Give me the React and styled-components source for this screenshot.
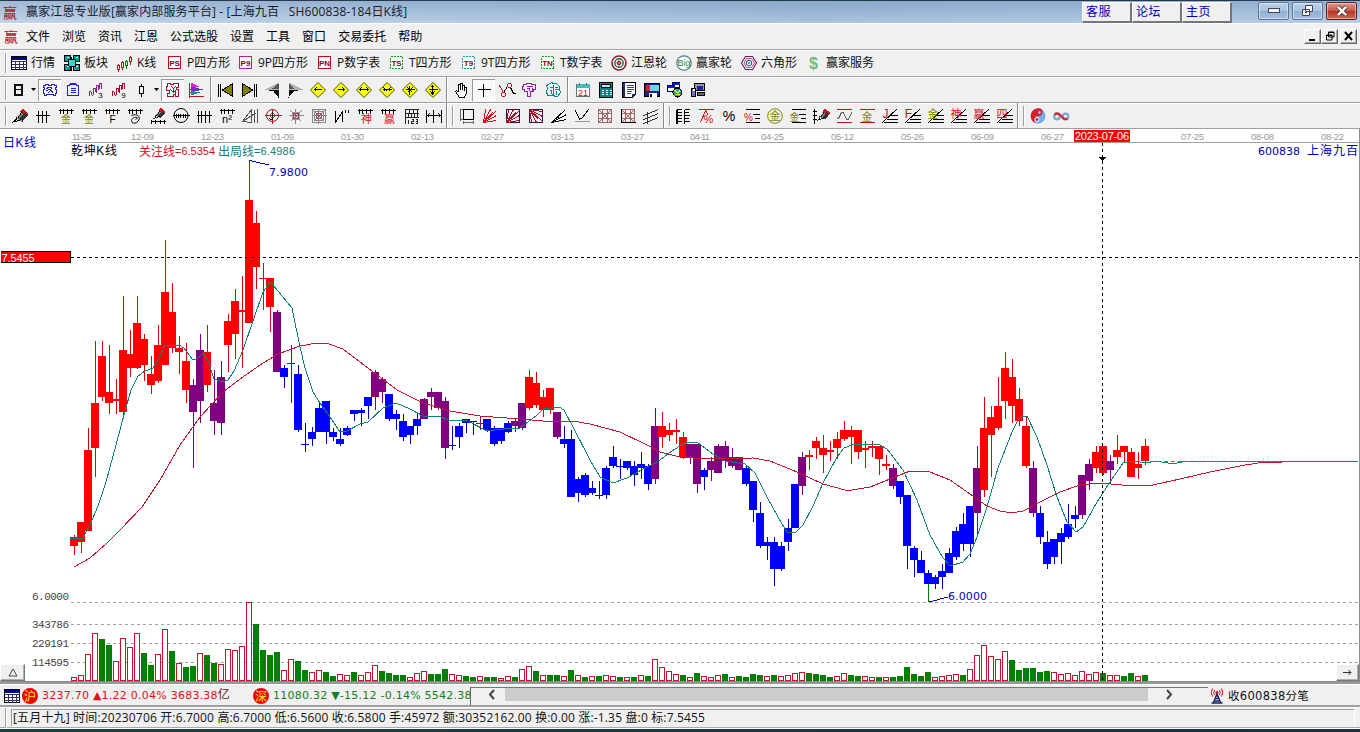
import React from 'react';
import styled, { createGlobalStyle, css } from 'styled-components';

const Global = createGlobalStyle`
  html, body { margin: 0; padding: 0; overflow: hidden; }
  body { background: #1b3140; font: 12px/16px "Open Sans", "Noto Sans CJK SC", sans-serif; color: #111; }
  * { box-sizing: border-box; }
  svg { display: block; flex: none; overflow: visible; }
`;

const Window = styled.div`
  width: 1360px; height: 732px; display: flex; flex-direction: column;
  background: #f0f0f0; overflow: hidden;
`;
const TitleBar = styled.header`
  height: 23px; flex: none; display: flex; align-items: flex-start; padding-left: 2px;
  border-top: 1px solid #27374c;
  background: linear-gradient(90deg, rgba(255,255,255,.12), rgba(255,255,255,0) 30%, rgba(60,110,170,.12) 60%, rgba(255,255,255,0)), linear-gradient(#93b0d0, #b9cee6);
`;
const Slot = styled.div`margin: ${p => p.$t || 0}px 0 0 ${p => p.$l || 0}px;`;
const Caption = styled.span`
  margin-left: 8px; line-height: 21px; flex: 1; white-space: pre; color: #16202c; letter-spacing: .13px;
`;
const LinkButton = styled.button`
  width: 49px; height: 20px; margin: 1px 1px 0 0; padding: 0 0 0 3px; text-align: left;
  font: 12px/16px "Liberation Sans", "Noto Sans CJK SC", sans-serif; letter-spacing: .4px; color: #0000b0; background: #f0f0f0;
  border: 1px solid; border-color: #fff #777 #777 #fff; box-shadow: 1px 1px 0 #6e7780;
`;
const FrameButtons = styled.div`display: flex; gap: 3px; margin: 1px 3px 0 26px;`;
const FrameButton = styled.button`
  width: 31px; height: 18px; padding: 0; display: grid; place-items: center;
  border: 1px solid ${p => (p.$close ? '#5b2020' : '#5d7896')}; border-radius: 2px;
  box-shadow: inset 0 0 0 1px rgba(255,255,255,.45);
  background: ${p => (p.$close ? 'linear-gradient(#dc9a8c, #c9584a 48%, #b03422 50%, #cf6a52)' : 'linear-gradient(#bdd1e8, #a9c2de 48%, #8fadcf 50%, #a8c3e0)')};
`;
const line = css`border-bottom: 1px solid #a0a0a0; box-shadow: inset 0 1px 0 #fff;`;
const MenuBar = styled.nav`
  height: 27px; flex: none; display: flex; align-items: center; padding-left: 3px; ${line}
`;
const MenuItem = styled.span`margin-left: ${p => (p.$first ? 7 : 12)}px; padding-top: 1px; white-space: nowrap; color: #000;`;
const MdiButtons = styled.div`display: flex; margin: 0 3px 0 auto;`;
const MdiButton = styled.button`
  width: 17px; height: 15px; padding: 0; margin-left: ${p => p.$gap || 0}px; display: grid; place-items: center;
  background: #f0f0f0; border: 1px solid; border-color: #fff #666 #666 #fff; box-shadow: inset -1px -1px 0 #aaa;
`;
const ToolBar = styled.div`
  height: ${p => p.$h || 26}px; flex: none; display: flex; align-items: center; padding-left: 5px; ${line}
`;
const Grip = styled.i`width: 2px; height: 20px; flex: none; margin-right: ${p => p.$r ?? 4}px; border-left: 1px solid #a0a0a0; border-right: 1px solid #fff;`;
const Divider = styled.i`width: 2px; height: 25px; flex: none; border-left: 1px solid #8c8c8c; border-right: 1px solid #fff; margin: 0 ${p => p.$r ?? 6}px 0 ${p => p.$l ?? 3}px;`;
const Labelled = styled.div`
  width: ${p => p.$w}px; display: flex; align-items: center; gap: 4px; white-space: nowrap; color: #111;
`;
const Tool = styled.div`
  width: ${p => p.$w || 23}px; height: 22px; flex: none; display: grid; place-items: center;
  ${p => p.$on && css`background: #f9f9fb; box-shadow: inset 1px 1px 0 #999, inset -1px -1px 0 #fff;`}
`;
const ChartPane = styled.main`
  position: relative; height: 553px; flex: none; background: #fff; border-right: 1px solid #8d8d8d; border-bottom: 1px solid #8d8d8d;
`;
const CornerButton = styled.button`
  position: absolute; bottom: 0; ${p => (p.$right ? 'right: 0;' : 'left: 0;')}
  width: ${p => (p.$right ? 23 : 25)}px; height: 17px; padding: 0; background: #f0f0f0; display: grid; place-items: center;
  border: 1px solid; border-color: #fff #777 #777 #fff; box-shadow: inset -1px -1px 0 #b0b0b0;
`;
const QuoteBar = styled.div`
  height: 25px; flex: none; display: flex; align-items: center; padding: 2px 0 0 4px;
  border-top: 2px solid #999; border-bottom: 2px solid #a0a0a0; box-shadow: inset 0 1px 0 #fff;
`;
const Quotes = styled.div`width: 466px; display: flex; align-items: center; overflow: hidden; flex: none;`;
const Market = styled.b`
  width: 16px; height: 16px; border-radius: 50%; background: #f00000; color: #ffee20; flex: none;
  font: 12px/15px "Noto Sans CJK SC", sans-serif; text-align: center; margin-left: ${p => p.$l}px;
`;
const Quote = styled.span`
  margin-left: 4px; width: ${p => p.$w}px; white-space: nowrap; flex: none; color: ${p => p.$c};
  font: 11px/16px "DejaVu Sans", "Noto Sans CJK SC", sans-serif; letter-spacing: .24px;
`;
const Unit = styled.span`color: #701018; font-size: 12px;`;
const ScrollBar = styled.div`
  width: 738px; height: 18px; flex: none; display: flex; align-items: center; border-left: 1px solid #666; border-top: 1px solid #777; padding-bottom: 3px;
`;
const ScrollEnd = styled.div`width: ${p => p.$w}px; display: flex; padding-left: ${p => p.$p}px;`;
const Thumb = styled.div`width: 643px; height: 13px; background: #cdcdcd;`;
const Receive = styled.span`
  margin-left: 4px; white-space: nowrap; font: 12px/16px "DejaVu Sans", "Noto Sans CJK SC", sans-serif; letter-spacing: .3px; font-size: 11.500px; color: #111;
`;
const InfoBar = styled.footer`
  height: 21px; flex: none; display: flex; align-items: center; padding: 2px 5px 1px 5px;
  border-bottom: 1px solid #aaa; box-shadow: inset 0 1px 0 #fff, 0 1px 0 #fff; margin-bottom: 1px;
`;
const InfoText = styled.div`
  flex: 1; height: 17px; line-height: 16px; border-left: 1px solid #a0a0a0; border-top: 1px solid #a0a0a0; border-right: 1px solid #fff;
  white-space: pre; color: #111; letter-spacing: .162px; padding-left: 1px;
`;
const Desktop = styled.div`flex: 1; background: linear-gradient(90deg, #1e4044, #1c2f45);`;

/* ---- icons ---- */
const Ic = ({ children, s = 16 }) => (
  <svg width={s} height="16" viewBox={`0 0 ${s} 16`} shapeRendering="crispEdges">
    <g transform="translate(.5 .5)" fill="none">{children}</g>
  </svg>
);
const P = ({ d, s = '#000', f = 'none', w = 1, aa }) => (
  <path d={d} stroke={s} fill={f} strokeWidth={w} shapeRendering={aa ? 'auto' : undefined} />
);
const T = ({ c = '#000', x = 7.5, y = 14, z = 11, children }) => (
  <text x={x} y={y} fontSize={z} fill={c} textAnchor="middle" fontFamily='"Liberation Sans", "Noto Sans CJK SC", sans-serif'>{children}</text>
);
const RED = '#c8101c', OLV = '#868600';
const Logo = () => <Ic><T c="#b01020" z={14} y={13}>赢</T></Ic>;
const Table = () => (
  <Ic><P d="M0 1h15v13h-15z" f="#fff" /><P d="M0 2h15M0 3h15" s="#000090" w={2} /><P d="M0 6h15M0 9h15M0 12h15M4 5v9M8 5v9M12 5v9" s="#30305a" /></Ic>
);
const Blocks = () => (
  <Ic>
    <P d="M0 0h6v6h-6zM9 0h6v6h-6zM0 9h6v6h-6zM9 9h6v6h-6z" f="#159a9a" />
    <P d="M4 4h7v7h-7z" f="#40d0d0" /><P d="M7 1v3M7 11v4" /><P d="M2 2h2M11 2h2M2 11h2M11 11h2" s="#c0ffff" />
  </Ic>
);
const KIcon = () => (
  <Ic>
    <P d="M1 8v2M1 14v2M0 10h2v4h-2zM5 5v2M5 12v2M4 7h2v5h-2z" s={RED} /><P d="M9 4v2M9 10v3M8 6h2v4h-2z" s="#008000" /><P d="M13 0v2M13 6v3M12 2h2v4h-2z" s={RED} />
  </Ic>
);
const Boxed = ({ c, t, dash }) => (
  <Ic>
    <rect x="1" y="1" width="12" height="12" stroke={c} fill="#fff" strokeDasharray={dash ? '2 1' : undefined} />
    <text x="7" y="10" fontSize="8" fontWeight="bold" fill="#8a0018" textAnchor="middle" fontFamily="Liberation Sans">{t}</text>
  </Ic>
);
const Wheel = () => (
  <Ic><g shapeRendering="auto"><circle cx="7.5" cy="7.5" r="7" stroke="#8c2030" strokeWidth="1.6" fill="#fff" /><circle cx="7.5" cy="7.5" r="4.2" stroke="#207040" strokeWidth="1.4" /><circle cx="7.5" cy="7.5" r="1.6" stroke="#8c2030" strokeWidth="1.2" /><P aa d="M7.5 3v9M3 7.5h9" s="#704040" w={.6} /></g></Ic>
);
const Big = () => (
  <Ic><g shapeRendering="auto"><circle cx="7.5" cy="7.5" r="7.2" stroke="#507890" fill="#fff" strokeWidth="1.2" /><T z={9} y={10.5} c="#258a45">Big</T></g></Ic>
);
const Hexa = () => (
  <Ic><g shapeRendering="auto"><P aa d="M4 1h7l4 6.5-4 6.5H4L0 7.5z" s="#602080" f="#fff" w={1.2} /><P aa d="M5 3h5l3 4.5-3 4.5H5L2.5 7.5z" s="#d04050" /><circle cx="7.5" cy="7.5" r="2.8" stroke="#2040a0" /><circle cx="7.5" cy="7.5" r="1" fill="#209060" /></g></Ic>
);
const Dollar = () => <Ic><text x="7" y="13" fontSize="16" fontWeight="bold" fill="#75bb78" textAnchor="middle" fontFamily="Liberation Sans">$</text></Ic>;
const Drop = () => <svg width="5" height="3"><path d="M0 0h5L2.5 3z" /></svg>;

const Day = () => <Ic><path d="M3 2h9v12H3zM5 4v3h5V4zM5 8v4h5V8z" fill="#111" fillRule="evenodd" transform="translate(-.5 -.5)" /></Ic>;
const Picture = () => <Ic><P d="M1 3h2v-1h3v1h3V2h3v1h2v2h-1v2h1v4h-1v2h-2v-1H4v1H2v-2H1V7h1V5H1zM4 6q3-2 6 0M3 9q4-4 8 1M5 11l3-3 3 3M6 7h2" s="#2424c8" /></Ic>;
const Clip = () => <Ic><P d="M4 2h7v1h2v10H2V3h2zM5 1h5v1H5zM5 6h5M5 8h5M5 10h5" s="#2020d8" /></Ic>;
const Wave = ({ c, n }) => <Ic><P d="M1 13V9h1l1 1v2l1 1 1-1V6h2v3l1 1V3h2v4l1-1V1h2v5" s={c} /><T x={12} y={15} z={8}>{n}</T></Ic>;
const Candle = () => <Ic><P d="M6 4h4v7H6zM8 1v3M8 11v3" /></Ic>;
const Puzzle = () => <Ic><P d="M2 1h3v1h3V1h5v4h-2v2h2v7h-3v-2H8v2H2v-3h2V8H1V4h1zM6 4l2 2 2-2M5 7l3 3 2-2v3M8 6v4" s="#a01028" /></Ic>;
const Flag = () => <Ic><P d="M1 0v15M0 14h15" s={RED} /><path d="M2 0l8 4-8 3z" fill="#e020e0" /><path d="M2 4l13 3-13 3z" fill="#7030c0" /><path d="M2 8l9 2-9 3z" fill="#109090" /></Ic>;
const First = ({ flip }) => <Ic><g transform={flip ? 'translate(15 0) scale(-1 1)' : undefined}><P d="M0 1v13M2 1v13" /><P d="M14 1v13L4 7.5z" f="#808000" /></g></Ic>;
const Arrow3 = ({ flip }) => <Ic><g transform={flip ? 'translate(15 0) scale(-1 1)' : undefined}><path d="M0 7L14 0v7z" fill="#b0b0b0" /><path d="M0 7h14v8L9 9z" fill="#101010" /><path d="M8 6h6V1z" fill="#555" /></g></Ic>;
const GLYPH = {
  l: 'M4 7h7M6 5L4 7l2 2', r: 'M4 7h7M9 5l2 2-2 2', h: 'M3 7h9M5 5L3 7l2 2M10 5l2 2-2 2', i: 'M3 7h9M4 5l2 2-2 2M11 5L9 7l2 2M7 6v2',
  x: 'M3 7h9M7 3v9M5 5l5 5M10 5l-5 5', v: 'M3 7h9M7 3v9M5 5l2-2 2 2M5 9l2 3 2-3',
};
const Diamond = ({ g }) => <Ic><P d="M7.5 0L15 7.5 7.5 15 0 7.5z" f="#ffff10" s="#505000" aa /><P d={GLYPH[g]} /></Ic>;
const Hand = () => <Ic><P d="M5 9V2h2v5M7 7V1h2v6M9 7V3h2v5M11 8V5h2v5l-2 5H6L2 9l1-1 2 2" f="#fff" /></Ic>;
const Plus = () => <Ic><P d="M7 1v13M1 7h13" /></Ic>;
const Nodes = () => <Ic><P d="M4 10l4-6M11 5l3 6h2" /><circle cx="10" cy="3" r="2" stroke={RED} /><circle cx="4" cy="12" r="2" stroke={RED} /><P d="M0 3l4 7" s={RED} /></Ic>;
const Cloud = ({ c, v }) => <Ic><P d={v ? 'M3 2l3-2 2 1h3l3 3v3l1 3-3 4H9l-1-2-2 1H2l-1-4 1-3-1-3zM8 2v9M4 5h3M9 5h3M4 8h2v3M11 8v4M9 7h4' : 'M1 2h3V1h5v1h4v5h-2v2H8v5H5V9H2V7H0V4h1zM4 4h6M4 6h3v2M10 5v3'} s={c} /></Ic>;
const Calendar = () => <Ic><P d="M1 2h13v12H1z" f="#fff" s="#607878" /><path d="M1 1h13v4H1z" fill="#48b8b8" /><P d="M4 0v2M11 0v2" s="#607070" /><T c={RED} z={9} y={13}>21</T></Ic>;
const Calc = () => <Ic><P d="M1 0h13v15H1z" f="#108080" /><P d="M3 2h9v3H3z" f="#b0f0f0" /><P d="M3 8h2M7 8h2M11 8h2M3 10h2M7 10h2M11 10h2M3 12h2M7 12h2M11 12h2" s="#e0ffff" /></Ic>;
const Notebook = () => <Ic><P d="M1 0h13v12l-3 3H1z" f="#fff" /><P d="M2 0v14" w={2} s="#1c2c80" /><P d="M5 3h7M5 5h7M5 7h7M5 9h5M5 11h4" s="#404080" /><path d="M10 15v-4h4z" fill="#1c2c80" /></Ic>;
const Disk = () => <Ic><P d="M0 1h15v13H0z" f="#1c1c8c" /><path d="M1 2h4v6H1z" fill="#e02020" /><path d="M5 2h9v6H5z" fill="#68d8e8" /><path d="M4 10h8v4H4z" fill="#fff" /><path d="M5 11h2v3H5z" fill="#111" /></Ic>;
const WinGlobe = () => <Ic><P d="M0 3h7v6H0zM5 0h7v5H5z" f="#fff" s="#000080" /><P d="M0 4h7M5 1h7" s="#1020c0" w={2} /><circle cx="10" cy="10" r="4.5" fill="#30a0a0" stroke="#000" /><P d="M7 8l3 2 3-2M8 12h4" s="#e8e840" w={1.5} /></Ic>;
const Pcs = () => <Ic><P d="M4 1h10v7H4z" f="#9898a8" /><path d="M6 3h6v4H6z" fill="#2020a0" /><P d="M1 6h4v8H1z" f="#7070c8" /><P d="M7 10h7v3H7z" f="#666" /><path d="M2 6h2v2H2z" fill="#fff" /></Ic>;

const Pen = () => <><path d="M4 10L8 3l6 5-5 5z" fill="#8a8a8a" /><path d="M7 3l3-3 6 5-2 3z" fill="#c81420" /><path d="M7 10l5-6 3 3-5 6z" fill="#333" /><P d="M9 4l-4 6M4 9l-1 4 6-2M0 14l4-3" /><P d="M8 4l-3 4" s="#ddd" /></>;
const Pencil = () => <Ic><Pen /></Ic>;
const Comb = ({ children }) => <Ic><P d="M0 2h15M2 0v5M5 0v5M9 0v5M13 0v5" />{children}</Ic>;
const Hash = ({ n = 3 }) => <Ic><P d={n === 3 ? 'M0 7h14M3 2v12M7 2v12M11 2v12' : 'M0 7h15M2 2v12M5 2v12M9 2v12M13 2v12'} /></Ic>;
const Spiral = () => <Comb><P d="M4 7c8-3 10 4 5 7s-7-4-2-5 2 2 1 2" aa /></Comb>;
const PenRule = () => <Ic><g transform="translate(2 -1) scale(.82)"><Pen /></g><P d="M0 13h15M1 11v4M5 11v4M10 11v4M14 11v4" /></Ic>;
const Disc = () => <Ic><circle cx="7.5" cy="7" r="7" stroke="#000" shapeRendering="auto" /><P d="M-1 7h17M3 5v4M5 5v4M7 5v4M10 5v4M12 5v4" /></Ic>;
const Fan1 = () => <Ic><P d="M0 13L9 1v13zM0 13L14 4M9 1v13M12 1v13M15 0v14" s="#555" /></Ic>;
const CrossC = () => <Ic><circle cx="7" cy="7" r="6" stroke="#801830" shapeRendering="auto" /><P d="M-1 7h17M7 0v15" s={RED} /><P d="M7 3v8M4 10l3 2" /><circle cx="7" cy="7" r="2" stroke="#933" /></Ic>;
const Web = ({ sq }) => <Ic><P d="M7 0v15M0 7h15M2 2l11 11M13 2L2 13" s="#888" />{sq ? <P d="M1 1h13v13H1zM3 3h9v9H3z" s="#888" /> : <circle cx="7.5" cy="7.5" r="4" stroke="#999" />}<P d="M5 5h5v5H5zM6 6l3 3M9 6L6 9" s="#a05060" /></Ic>;
const Zig = () => <Ic><P d="M1 14V2M1 14L8 3M8 13V2" /><P d="M11 1v3M14 1v3" /></Ic>;
const Ruler = () => <Ic><P d="M1 1h14M1 5h14M1 9h14M2 0v15M6 1v4M10 1v4M14 1v8M5 5v4M8 5v4M11 5v4M5 11v4M8 11h2v2h-2v2h2M12 11h2v4h-2M12 13h2" s="#222" /></Ic>;
const Span = () => <Ic><P d="M0 1v13M7 1v13M15 1v13M1 7h13M3 5L1 7l2 2M12 5l2 2-2 2" /></Ic>;
const Box1 = () => <Ic><P d="M4 1h10v10H4z" /><P d="M1 1v11M0 1h3M0 11h3M4 14h10M4 12v3M14 12v3" s="#666" /></Ic>;
const Rays = ({ c, box, flip }) => (
  <Ic><g transform={flip ? 'translate(0 15) scale(1 -1)' : undefined}>{box && <P d="M1 1h13v13H1z" s="#401040" />}<P d="M1 14L3 1M1 14L8 1M1 14L14 2M1 14L14 7M1 14l13-2M1 14L10 4" s={c} /></g></Ic>
);
const Rays2 = () => <Ic><P d="M0 14L14 1M0 14L15 6M0 14l15-3M6 8l2 3" /></Ic>;
const Vee = () => <Ic><P d="M1 2l4 9 3-2 6-8" /><P d="M0 13h15" s="#999" /></Ic>;
const GridI = ({ b }) => <Ic><P d="M1 1h13v13H1zM5 1v13M10 1v13M1 5h13M1 10h13M1 1l13 13M14 1L1 14" s="#a06868" />{b && <P d="M1 0v14h14" />}</Ic>;
const Lines = () => <Ic><P d="M0 7l15-6M0 11l15-6M0 15l15-6M4 3v12" s="#333" /></Ic>;
const Ladder = () => <Ic><P d="M1 1v14M1 1h5M1 4h5M1 7h5M1 10h5M1 13h5M9 1v14M9 1h5M9 4h4M9 7h5M9 10h4M9 13h5" /><P d="M2 1v14" /></Ic>;
const PctRoof = () => <Ic><P d="M0 1h15M2 14L7 2l3 5" s={RED} /><T c={RED} z={11} x={10}>%</T></Ic>;
const LineGlyph = ({ c, g }) => <Ic><P d="M1 1h14M8 6h7M1 14h14M10 10h5" /><T c={c} z={10} x={4} y={12}>{g}</T></Ic>;
const CoinG = () => <Ic><circle cx="7.5" cy="7.5" r="7.3" stroke={OLV} shapeRendering="auto" /><T c={OLV} z={11} y={11.5}>金</T></Ic>;
const RulePen = () => <Ic><P d="M1 0v15M-1 3h4M-1 7h4M-1 11h4" /><g transform="translate(3 0) scale(.85)"><Pen /></g></Ic>;
const Sine = () => <Ic><P d="M0 1h15M0 14h15" s={RED} /><P d="M0 10h2l3-6h2l3 7h2l3-7" s="#666" /></Ic>;
const Bank = () => <Ic><P d="M0 1h15M0 14h15" s={RED} /><T c={OLV} z={11} y={12}>金</T></Ic>;
const Fan = ({ g, c = '#d01018' }) => {
  const latin = g.charCodeAt(0) < 128;
  return <Ic><P d="M0 14L15 0M8 7h7M4 11h11M1 14h14" /><T c={c} z={latin ? 12 : 11} x={latin ? 3 : 4.5} y={9}>{g}</T></Ic>;
};
const Yin = () => (
  <Ic><g shapeRendering="auto"><circle cx="7.5" cy="7.5" r="7.5" fill="#6fb0ea" /><path d="M10 0A7.7 7.7 0 1 0 6 15a4 4 0 0 1 2-7.5A4 4 0 0 0 10 0z" fill="#d81c2c" /><circle cx="9" cy="4" r="1.4" fill="#8fc4f0" /><circle cx="6.5" cy="11" r="2" stroke="#fff" fill="#d81c2c" /></g></Ic>
);
const Infinity8 = () => <Ic><g shapeRendering="auto"><circle cx="3.5" cy="8" r="2.8" stroke="#78acd8" strokeWidth="2.2" /><circle cx="12" cy="8" r="2.8" stroke="#78acd8" strokeWidth="2.2" /><P aa d="M1 6c4-3 6 1 7 2s3 4 6 2" s="#d02838" w={2.2} /></g></Ic>;
const Tower = () => (
  <Ic s={14}><g shapeRendering="auto"><P aa d="M6.500 5L3 14M6.500 5L10 14M4.500 10h4M1 14.500h11M5 7.500h3M3.500 12.500h6" s="#182068" w={1.3} />
    <P aa d="M4 1.500q-1.500 2.500 0 5M2 0q-2.500 4 0 8M9 1.500q1.500 2.500 0 5M11 0q2.500 4 0 8" s={RED} /><circle cx="6.5" cy="4" r="1.5" fill={RED} /></g></Ic>
);

/* ---- chart data: high, body top, body bottom, low, colour, volume top, volume direction ---- */
const RAW = `535 537 546 555 r 677 u|522 522 542 553 r 675 u|428 450 531 531 r 654 u|341 403 448 477 r 633 u|341 356 397 401 r 639 d|345 392 403 414 r 645 d|379 399 401 414 r 661 u|296 350 412 417 r 638 u|330 354 368 377 r 647 u|296 323 368 369 r 633 u
334 339 365 381 r 653 d|356 374 385 394 r 665 d|325 345 381 383 r 654 u|240 292 365 365 r 629 u|283 312 348 353 r 651 d|336 348 352 374 r 663 u|343 361 390 403 r 667 d|379 385 412 468 p 666 d|334 350 401 423 p 653 u|325 352 385 392 r 655 d
370 403 421 435 p 663 d|361 377 423 435 p 664 u|314 321 345 372 r 649 u|289 301 334 359 r 650 u|276 310 312 368 r 646 u|160 200 323 323 r 602 u|211 223 267 289 r 624 d|263 278 279 310 r 650 d|278 278 307 332 r 655 d|310 312 372 372 p 652 d
365 368 377 388 b 670 u|345 363 364 403 p 659 u|365 374 430 432 b 661 d|423 444 445 452 b 670 d|427 432 439 446 b 672 u|401 408 432 432 b 670 u|401 401 432 444 b 672 d|428 432 437 441 b 676 d|428 439 444 446 b 674 u|426 428 435 436 b 675 u
410 410 414 421 b 672 d|408 410 413 426 b 675 u|397 397 406 419 b 672 u|370 372 397 410 p 665 u|377 379 392 403 p 671 d|394 394 419 421 b 673 d|410 414 419 430 b 675 d|414 421 437 441 b 675 d|426 426 435 444 b 677 u|413 419 426 435 b 673 u
398 399 419 419 p 671 u|388 392 397 410 p 674 d|392 392 408 410 p 674 d|397 401 448 459 p 669 d|426 445 446 450 b 674 u|423 426 437 448 b 675 u|419 419 423 433 b 676 d|421 421 422 435 b 677 d|417 423 424 430 p 676 u|419 419 430 432 b 677 d
426 428 444 446 b 677 d|428 428 441 444 b 678 u|421 423 432 433 b 676 u|419 421 426 432 p 677 d|403 403 428 430 p 669 u|370 377 408 410 r 666 u|372 383 405 408 r 671 d|390 397 410 417 r 675 u|388 388 410 414 r 675 d|412 412 437 439 p 675 d
426 439 444 448 b 676 u|430 439 497 497 b 670 d|477 479 493 502 b 675 u|473 475 495 497 b 677 d|481 488 493 495 b 676 u|481 495 496 499 b 676 d|466 468 495 499 b 675 u|446 457 466 468 b 676 u|459 466 467 479 b 677 d|461 461 468 470 b 677 u
461 466 475 486 b 677 d|452 464 468 479 b 675 u|464 466 484 490 b 676 d|408 426 479 484 p 659 u|412 426 437 448 r 667 u|423 430 435 441 r 671 u|419 430 432 444 r 674 u|432 437 457 459 r 675 d|444 444 457 464 p 677 u|444 444 484 493 p 673 d
468 470 477 490 b 676 u|457 461 470 481 p 677 u|444 446 473 473 p 675 u|441 446 461 468 p 674 d|448 457 466 468 p 677 u|457 457 470 470 p 676 d|466 468 484 486 b 677 d|481 481 510 522 b 674 d|502 513 546 548 b 675 d|537 542 546 560 b 676 u
537 542 569 586 b 675 d|542 546 569 571 b 676 u|519 528 542 551 b 675 u|484 484 528 528 b 673 u|452 457 486 495 p 672 u|450 455 457 470 r 673 d|437 441 448 459 r 674 d|435 448 455 473 r 675 d|441 450 452 461 r 677 d|432 439 448 459 r 676 u
421 430 439 441 r 673 u|426 430 437 464 r 675 d|430 430 452 459 r 676 d|441 448 450 468 r 676 u|441 446 448 457 r 677 u|446 446 459 475 r 677 d|455 464 466 470 r 677 u|464 468 486 489 p 677 d|481 481 497 504 b 676 d|495 495 546 569 b 667 d
546 548 560 577 b 674 d|551 560 573 573 b 676 d|570 573 584 584 b 672 d|575 577 584 589 b 677 u|564 571 577 589 b 676 u|548 553 573 573 b 675 u|527 531 557 560 b 674 u|513 524 544 551 b 675 d|506 506 544 557 b 669 u|446 468 513 537 p 655 u
397 428 490 497 r 645 u|406 417 435 477 r 656 u|377 406 428 430 r 659 u|352 368 401 419 r 651 u|359 377 406 423 r 660 d|388 399 421 426 r 670 d|417 426 466 468 r 668 d|461 468 513 517 p 668 d|506 513 537 544 b 672 d|531 542 564 569 b 671 d
539 539 557 564 b 672 u|528 533 542 564 b 674 u|504 524 537 539 b 673 u|506 515 519 528 b 675 u|475 475 515 519 p 671 u|459 464 481 490 p 674 u|446 452 468 473 r 672 u|446 446 473 475 r 673 d|455 461 470 483 p 675 u|435 450 457 464 r 675 u
446 446 452 463 r 676 d|448 452 477 477 r 673 d|452 464 468 479 r 676 u|439 446 461 465 r 675 d`;
const BARS = RAW.split(/[|\n]/).map((row, i) => {
  const [h, t, b, l, c, v, dir] = row.trim().split(' ');
  return { x: 74 + 7 * i, h: +h, t: +t, b: +b, l: +l, c: { r: '#ff0000', p: '#800080', b: '#0000ff' }[c], wick: { r: '#e00000', p: '#780078', b: '#0000b8' }[c], v: +v, up: dir === 'u' };
});
const TEAL = '70,538 82,539 86,532 90,525 98,506 106,482 116,445 125,411 131,390 138,376 145,371 153,368 160,356 165,345 179,345 184,348 193,360 197,359 203,353 208,361 214,379 222,382 228,380 234,371 243,350 263,292 270,282 273,285 292,308 300,347 305,368 313,392 320,403 330,417 340,432 347,431 360,424 368,422 383,408 396,403 410,409 425,417 439,416 448,420 468,421 487,431 503,429 520,428 537,415 543,409 559,407 564,410 573,427 590,460 600,477 613,483 627,478 643,469 657,462 672,451 683,444 690,442 697,442 702,446 713,454 725,461 745,464 755,473 767,497 782,524 787,532 796,532 803,525 813,506 823,483 837,457 844,448 852,445 878,444 887,449 903,470 917,500 930,535 943,558 950,566 963,562 970,554 977,537 987,507 998,468 1012,432 1018,420 1022,416 1027,416 1037,437 1047,465 1057,497 1067,522 1076,532 1083,527 1097,502 1110,482 1123,463 1133,461 1146,463 1157,461 1173,464 1186,461 1358,461';
const CRIMSON = '74,567 90,558 107,543 120,530 142,507 160,480 180,445 200,417 223,392 240,379 260,365 278,354 300,346 317,343 329,344 343,349 360,362 380,377 397,390 423,403 450,411 480,416 520,419 543,421 573,421 590,424 620,432 647,445 660,452 680,457 707,459 753,458 770,461 797,472 823,484 845,490 852,490 870,487 890,479 910,471 930,472 950,480 970,494 987,506 1000,511 1012,513 1023,511 1040,502 1060,492 1080,485 1100,483 1133,486 1153,485 1180,479 1210,472 1245,465 1265,462 1282,462';
const DATES = [[72, '11-25', 19], [131, '12-09'], [201, '12-23'], [271, '01-09'], [341, '01-30'], [411, '02-13'], [481, '02-27'], [551, '03-13'], [621, '03-27'], [690, '04-11', 20], [761, '04-25'], [831, '05-12'], [901, '05-26'], [971, '06-09'], [1041, '06-27'], [1181, '07-25'], [1251, '08-08'], [1321, '08-22']];

const SANS = '"Liberation Sans", "Noto Sans CJK SC", sans-serif';
const MONO = '"Liberation Mono", "Noto Sans CJK SC", monospace';
const WIDE = '"DejaVu Sans", "Noto Sans CJK SC", sans-serif';
const Label = ({ x, y, w, c = '#000', z = 12, f = SANS, children }) => (
  <text x={x} y={y} textLength={w} fontSize={z} fill={c} fontFamily={f}>{children}</text>
);

function Chart() {
  return (
    <svg width="1359" height="552" viewBox="0 129 1359 552" shapeRendering="crispEdges">
      <path d="M71 142.5H1359" stroke="#a0a0a0" />
      {DATES.map(([x, t, w]) => <Label key={t} x={x} y={139.5} w={w || 23} z={9.5} c="#999">{t}</Label>)}
      {[602, 624, 643, 662].map(y => <path key={y} d={`M71 ${y + 0.5}H1358`} stroke="#a0a0a0" strokeDasharray="3 3" />)}
      {BARS.map(b => (
        b.up
          ? <rect key={b.x} x={b.x - 2.5} y={b.v + 0.5} width="5" height={681 - b.v - 1} fill="#fff" stroke="#c81428" />
          : <rect key={b.x} x={b.x - 3} y={b.v} width="6" height={681 - b.v} fill="#008000" />
      ))}
      {BARS.map(b => (
        <g key={b.x}>
          <rect x={b.x} y={b.h} width="1" height={b.l - b.h} fill={b.wick} />
          <rect x={b.x - 4} y={b.t} width="8" height={b.b - b.t} fill={b.c} />
        </g>
      ))}
      <path d="M928.5 584V602" stroke="#008000" />
      <polyline points={TEAL} fill="none" stroke="#108078" />
      <polyline points={CRIMSON} fill="none" stroke="#c01830" />
      <path d="M1150 461.5H1280" stroke="#c05050" strokeDasharray="4 3" />
      <path d="M71 257.5H1358M1102.5 143V681" stroke="#000" strokeDasharray="3 3" fill="none" />
      <path d="M1099 157h7l-3.5 4z" />
      <path d="M249.5 160.5L269 165M929 602L948 597" stroke="#0000b0" fill="none" />
      <rect x="1" y="251" width="70" height="12" />
      <rect x="1" y="252" width="69" height="10" fill="#f00" />
      <Label x={1.5} y={262} w={33} z={11} c="#fff">7.5455</Label>
      <rect x="1074" y="130" width="56" height="12" fill="#f00" />
      <Label x={1075} y={140} w={54} z={11} c="#fff">2023-07-06</Label>
      <Label x={3} y={147} w={33} c="#0000c0">日K线</Label>
      <Label x={71} y={155} w={46}>乾坤K线</Label>
      <Label x={139} y={156} w={36} c="#d01020">关注线</Label>
      <Label x={175} y={155} w={40} z={11} c="#d01020">=6.5354</Label>
      <Label x={218} y={156} w={36} c="#108078">出局线</Label>
      <Label x={254} y={155} w={41} z={11} c="#108078">=6.4986</Label>
      <Label x={1258} y={155} w={42} z={11} c="#0000b0" f={WIDE}>600838</Label>
      <Label x={1307} y={155} w={51} c="#0000b0">上海九百</Label>
      <Label x={269} y={176} w={39} z={11} c="#0000c8" f={WIDE}>7.9800</Label>
      <Label x={948} y={600} w={39} z={11} c="#0000c8" f={WIDE}>6.0000</Label>
      {[['6.0000', 600], ['343786', 628], ['229191', 647], ['114595', 666]].map(([t, y]) => (
        <Label key={t} x={32} y={y} w={37} z={11} c="#444" f={MONO}>{t}</Label>
      ))}
    </svg>
  );
}

const MENU = ['文件', '浏览', '资讯', '江恩', '公式选股', '设置', '工具', '窗口', '交易委托', '帮助'];
const VIEWS = [
  [53, <Table />, '行情'], [53, <Blocks />, '板块'], [50, <KIcon />, 'K线'], [71, <Boxed c="#b01020" t="PS" />, 'P四方形'],
  [79, <Boxed c="#b020b0" t="P9" />, '9P四方形'], [72, <Boxed c="#b01020" t="PN" />, 'P数字表'], [72, <Boxed c="#10a010" t="TS" dash />, 'T四方形'],
  [79, <Boxed c="#10a0a0" t="T9" dash />, '9T四方形'], [71, <Boxed c="#10a010" t="TN" dash />, 'T数字表'], [65, <Wheel />, '江恩轮'],
  [65, <Big />, '赢家轮'], [65, <Hexa />, '六角形'], [70, <Dollar />, '赢家服务'],
];
const group = list => list.map((icon, i) => <Tool key={i}>{icon}</Tool>);

export default function App() {
  return (
    <Window>
      <Global />
      <TitleBar>
        <Slot $t={3}><Logo /></Slot>
        <Caption>赢家江恩专业版[赢家内部服务平台] - [上海九百   SH600838-184日K线]</Caption>
        {['客服', '论坛', '主页'].map(t => <LinkButton key={t}>{t}</LinkButton>)}
        <FrameButtons>
          <FrameButton><svg width="12" height="6"><rect x=".5" y=".5" width="11" height="4" fill="#f4f4f4" stroke="#445" /></svg></FrameButton>
          <FrameButton><svg width="13" height="12"><path d="M4.5.5h7v6h-7zM1.5 4.5h7v6h-7z" fill="#f4f4f4" stroke="#445" /><path d="M4 7h2v1H4z" fill="#445" /></svg></FrameButton>
          <FrameButton $close><svg width="12" height="10"><path d="M2 1l8 8M10 1L2 9" stroke="#544" strokeWidth="4" /><path d="M2 1l8 8M10 1L2 9" stroke="#fff" strokeWidth="2.4" /></svg></FrameButton>
        </FrameButtons>
      </TitleBar>
      <MenuBar>
        <Logo />
        {MENU.map((t, i) => <MenuItem key={t} $first={!i}>{t}</MenuItem>)}
        <MdiButtons>
          <MdiButton><svg width="9" height="9"><path d="M1 7h6v2H1z" /></svg></MdiButton>
          <MdiButton><svg width="10" height="10" fill="none" stroke="#000"><path d="M3.5 1v5h5.500V1zM3 1.500h6M1.500 4v5H7V4zM1 4.500h6" /></svg></MdiButton>
          <MdiButton $gap={2}><svg width="9" height="8"><path d="M1 0l7 8M8 0L1 8" stroke="#000" strokeWidth="2" /></svg></MdiButton>
        </MdiButtons>
      </MenuBar>
      <ToolBar $h={27}>
        <Grip />
        {VIEWS.map(([w, icon, t]) => <Labelled key={t} $w={w}>{icon}{t}</Labelled>)}
      </ToolBar>
      <ToolBar>
        <Grip $r={3} />
        <Tool $w={18}><Day /></Tool><Tool $w={10}><Drop /></Tool>
        <Tool $w={23} $on><Picture /></Tool><Tool><Clip /></Tool>
        <Tool><Wave c="#902090" n="3" /></Tool><Tool><Wave c="#a01028" n="9" /></Tool>
        <Tool $w={21}><Candle /></Tool><Tool $w={10}><Drop /></Tool>
        <Tool $on><Puzzle /></Tool><Tool><Flag /></Tool>
        <Divider $l={3} $r={2} />
        {group([<First />, <First flip />, <Arrow3 />, <Arrow3 flip />, ...['l', 'r', 'h', 'i', 'x', 'v'].map(g => <Diamond g={g} />)])}
        <Divider $l={2} $r={1} />
        <Tool><Hand /></Tool><Tool $on><Plus /></Tool>{group([<Nodes />, <Cloud c="#9020a0" />, <Cloud c="#1080a0" v />])}
        <Divider $l={3} $r={2} />
        {group([<Calendar />, <Calc />, <Notebook />, <Disk />, <WinGlobe />, <Pcs />])}
      </ToolBar>
      <ToolBar>
        <Grip $r={1} />
        {group([
          <Pencil />, <Hash />, <Comb><T c={OLV} z={10}>金</T></Comb>, <Comb><T c={OLV} z={10}>金</T></Comb>,
          <Comb><T z={10} x={8}>F</T></Comb>, <Spiral />, <PenRule />, <Disc />, <Hash n={4} />, <Comb><T z={11}>n²</T></Comb>, <Fan1 />,
          <CrossC />, <Web />, <Web sq />, <Zig />, <Comb><T c="#e01018" z={11} x={9}>神</T></Comb>, <Comb><T c="#e01018" z={11} x={9}>赢</T></Comb>, <Ruler />, <Span />,
        ])}
        <Divider $l={1} $r={4} /><Grip $r={1} />
        {group([<Box1 />, <Rays c={RED} />, <Rays c="#a01028" box />, <Rays c="#a01028" box flip />, <Rays2 />, <Vee />, <GridI />, <GridI b />, <Lines />])}
        <Divider $l={1} $r={4} /><Grip $r={0} />
        {group([
          <Ladder />, <PctRoof />, <Ic><T z={14} y={12}>%</T></Ic>, <LineGlyph c="#d01018" g="%" />, <CoinG />, <LineGlyph c={OLV} g="金" />, <RulePen />, <Sine />, <Bank />,
          <Fan g="J" />, <Fan g="F" />, <Fan g="金" c={OLV} />, <Fan g="神" />, <Fan g="赢" />, <Fan g="四" />,
        ])}
        <Divider $l={1} $r={4} /><Grip $r={1} />
        {group([<Yin />, <Infinity8 />])}
      </ToolBar>
      <ChartPane>
        <Chart />
        <CornerButton><svg width="10" height="9" fill="none" stroke="#444"><path d="M5 1L1 8h8z" /></svg></CornerButton>
        <CornerButton $right><svg width="9" height="7" fill="none" stroke="#333"><path d="M0 3.500h8M5.500 1L8 3.500 5.500 6" /></svg></CornerButton>
      </ChartPane>
      <QuoteBar>
        <Quotes>
          <Table />
          <Market $l={2}>沪</Market><Quote $c="#e01018" $w={207}>3237.70 ▲1.22 0.04% 3683.38<Unit>亿</Unit></Quote>
          <Market $l={4}>深</Market><Quote $c="#108020" $w={210}>11080.32 ▼-15.12 -0.14% 5542.38</Quote>
        </Quotes>
        <ScrollBar>
          <ScrollEnd $w={34} $p={17}><svg width="8" height="9" fill="none" stroke="#444" strokeWidth="2"><path d="M6 0L2 4.500 6 9" /></svg></ScrollEnd>
          <Thumb />
          <ScrollEnd $w={60} $p={17}><svg width="8" height="9" fill="none" stroke="#444" strokeWidth="2"><path d="M2 0l4 4.500L2 9" /></svg></ScrollEnd>
        </ScrollBar>
        <Slot $l={2}><Tower /></Slot>
        <Receive>收600838分笔</Receive>
      </QuoteBar>
      <InfoBar>
        <Grip $r={4} />
        <InfoText>[五月十九] 时间:20230706 开:6.7000 高:6.7000 低:6.5600 收:6.5800 手:45972 额:30352162.00 换:0.00 涨:-1.35 盘:0 标:7.5455</InfoText>
      </InfoBar>
      <Desktop />
    </Window>
  );
}
